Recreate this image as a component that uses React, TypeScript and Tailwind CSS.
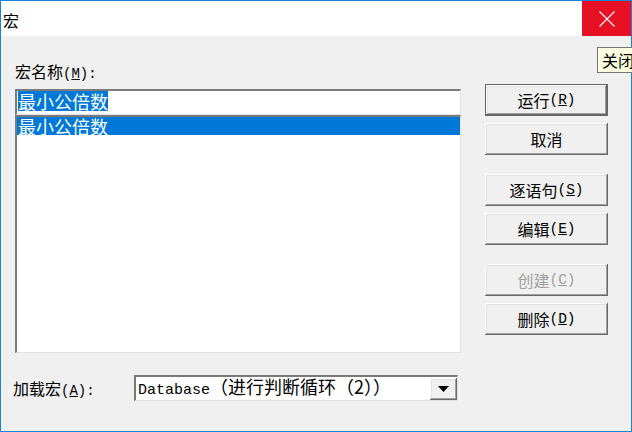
import React from "react";

const cjk = "font-['Noto_Sans_CJK_SC','Noto_Sans_CJK_JP',sans-serif]";
const mono = "font-['Liberation_Mono','Noto_Sans_CJK_SC',monospace]";
const raised =
  "shadow-[inset_-1px_-1px_0_#696969,inset_1px_1px_0_#ffffff,inset_-2px_-2px_0_#a0a0a0,inset_2px_2px_0_#e3e3e3]";
const sunken = "border-t-2 border-l-2 border-t-[#7a7a7a] border-l-[#7a7a7a] border-r border-b border-r-[#e3e3e3] border-b-[#e3e3e3]";

function Btn({
  cn,
  key1,
  def,
  disabled,
  className = "",
}: {
  cn: string;
  key1?: string;
  def?: boolean;
  disabled?: boolean;
  className?: string;
}) {
  return (
    <div
      className={`h-[32px] w-[123px] flex items-center justify-center bg-[#f0f0f0] ${raised} ${
        def ? "border border-[#646464]" : ""
      } ${disabled ? "text-[#a0a0a0]" : "text-black"} ${className}`}
    >
      <span className={`${cjk} text-[16px] leading-[20px]`}>{cn}</span>
      {key1 && (
        <span className={`${mono} text-[14.5px] leading-[20px]`}>
          (<u>{key1}</u>)
        </span>
      )}
    </div>
  );
}

export default function App() {
  return (
    <div className="relative w-[632px] h-[432px] overflow-hidden">
      <div className="w-[632px] h-[432px] border border-[#1883d7] flex flex-col bg-[#f0f0f0]">
        {/* title bar */}
        <div className="h-[35px] bg-white flex items-center justify-between shrink-0">
          <span className={`${cjk} text-[16px] leading-[20px] pl-[2px] pt-[2px] text-black`}>宏</span>
          <div className="h-full w-[49px] bg-[#e81123] flex items-center justify-center">
            <svg width="16" height="16" viewBox="0 0 16 16">
              <line x1="0.5" y1="0.5" x2="15.5" y2="15.5" stroke="white" strokeWidth="1.1" />
              <line x1="15.5" y1="0.5" x2="0.5" y2="15.5" stroke="white" strokeWidth="1.1" />
            </svg>
          </div>
        </div>
        {/* body */}
        <div className="flex flex-col flex-1">
          <div className="flex pl-[14px] pt-[25px]">
            <div className="w-[446px] flex flex-col">
              <div className="h-[20px] leading-[20px] text-black">
                <span className={`${cjk} text-[16px]`}>宏名称</span>
                <span className={`${mono} text-[14px]`}>
                  (<u>M</u>):
                </span>
              </div>
              <div className={`mt-[8px] h-[26px] bg-white ${sunken} pl-[1px] flex items-start`}>
                <span className={`${cjk} text-[18px] leading-[20px] bg-[#0078d7] text-white`}>
                  最小公倍数
                </span>
              </div>
              <div className={`h-[238px] bg-white ${sunken} flex flex-col`}>
                <div className={`h-[18px] bg-[#0078d7] text-white ${cjk} text-[18px] leading-[18px] pl-[1px]`}>
                  最小公倍数
                </div>
              </div>
            </div>
            <div className="ml-[24px] pt-[23px] flex flex-col">
              <Btn cn="运行" key1="R" def />
              <Btn cn="取消" className="mt-[7px]" />
              <Btn cn="逐语句" key1="S" className="mt-[19px]" />
              <Btn cn="编辑" key1="E" className="mt-[7px]" />
              <Btn cn="创建" key1="C" disabled className="mt-[19px]" />
              <Btn cn="删除" key1="D" className="mt-[7px]" />
            </div>
          </div>
          <div className="flex items-center pl-[12px] mt-[22px]">
            <div className="w-[121px] h-[20px] leading-[20px] text-black">
              <span className={`${cjk} text-[16px]`}>加载宏</span>
              <span className={`${mono} text-[14px]`}>
                (<u>A</u>):
              </span>
            </div>
            <div className={`w-[324px] h-[26px] bg-white ${sunken} flex items-center justify-between`}>
              <div className="pl-[2px] leading-[20px] text-black whitespace-nowrap">
                <span className={`${mono} text-[15px]`}>Database</span>
                <span className={`${cjk} text-[18px]`}>（进行判断循环（2））</span>
              </div>
              <div className={`w-[27px] h-[22px] bg-[#f0f0f0] ${raised} flex items-center justify-center`}>
                <svg width="11" height="6" viewBox="0 0 11 6">
                  <polygon points="0,0 11,0 5.5,6" fill="black" />
                </svg>
              </div>
            </div>
          </div>
        </div>
      </div>
      {/* tooltip */}
      <div className="absolute left-[597px] top-[47px] w-[50px] h-[26px] border border-[#767676] bg-[#ffffe1] pl-[4px] flex items-center">
        <span className={`${cjk} text-[16px] leading-[20px] text-black whitespace-nowrap`}>关闭</span>
      </div>
    </div>
  );
}
